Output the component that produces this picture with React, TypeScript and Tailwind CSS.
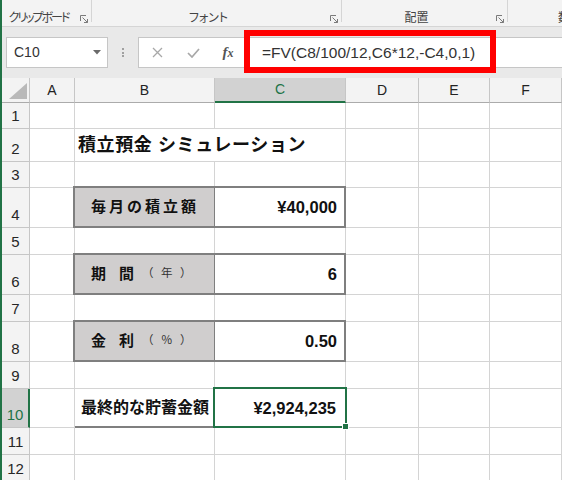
import * as React from 'react'

const cell = 'border-r border-b border-[#d4d4d4] bg-white'
const colHead =
  'flex items-center justify-center border-r border-b border-r-[#c6c6c6] border-b-[#ababab] bg-[#f3f3f3] text-[14px]'

export default function App() {
  return (
    <div className="h-[480px] w-[562px] overflow-hidden border-l-2 border-[#217346] bg-white font-['Liberation_Sans','Noto_Sans_CJK_JP',sans-serif] text-[#222]">
      <Ribbon />
      <FormulaBar />
      <Sheet />
    </div>
  )
}

function Ribbon() {
  return (
    <div className="flex h-[27px] border-b border-[#d5d5d5] bg-[#f3f3f3] text-[12px] leading-none text-[#444] [font-feature-settings:'palt']">
      <RibbonGroup label={<span className="tracking-[-2px]">クリップボード</span>} width="w-[90px]" />
      <RibbonGroup label="フォント" width="w-[250px]" />
      <RibbonGroup label="配置" width="w-[166px]" />
      <div className="flex flex-1 items-end pb-[2px] pl-[50px] whitespace-nowrap">数値</div>
    </div>
  )
}

function RibbonGroup({ label, width }: { label: React.ReactNode; width: string }) {
  return (
    <div className={`flex h-full shrink-0 ${width}`}>
      <div className="flex flex-1 items-end justify-center pb-[2px] whitespace-nowrap">{label}</div>
      <div className="flex w-[16px] items-end pb-[3px] pl-[5px]">
        <svg width="8" height="8" viewBox="0 0 8 8" fill="none" stroke="#7a7a7a" strokeWidth="1">
          <path d="M0.5 6V0.5H6" />
          <path d="M2.5 2.5l5 5M7.5 4v3.5H4" />
        </svg>
      </div>
      <div className="h-[22px] w-px bg-[#d5d5d5]" />
    </div>
  )
}

function FormulaBar() {
  return (
    <div className="relative flex h-[51px] bg-[#e9e9e9] pl-[4px] pt-[10px]">
      <div className="flex h-[31px] w-[102px] shrink-0 items-center border border-[#c6c6c6] bg-white pl-[7px] pr-[6px] text-[14px] text-[#333]">
        <span className="flex-1">C10</span>
        <svg width="8" height="5" viewBox="0 0 8 5">
          <path d="M0 0h8L4 4.5z" fill="#6a6a6a" />
        </svg>
      </div>
      <div className="flex h-[31px] w-[30px] shrink-0 flex-col items-center justify-center gap-[1.5px]">
        <span className="h-[2px] w-[2px] bg-[#a0a0a0]" />
        <span className="h-[2px] w-[2px] bg-[#a0a0a0]" />
        <span className="h-[2px] w-[2px] bg-[#a0a0a0]" />
      </div>
      <div className="flex h-[31px] w-[107px] shrink-0 items-center border-y border-l border-[#c6c6c6] bg-white">
        <div className="flex w-[36px] shrink-0 justify-center">
          <svg width="11" height="11" viewBox="0 0 11 11" stroke="#a8a8a8" strokeWidth="1.3">
            <path d="M1 1l9 9M10 1l-9 9" />
          </svg>
        </div>
        <div className="flex w-[36px] shrink-0 justify-center">
          <svg width="13" height="10" viewBox="0 0 13 10" fill="none" stroke="#a8a8a8" strokeWidth="1.7">
            <path d="M1 5l4 4 7-8" />
          </svg>
        </div>
        <div className="flex w-[34px] shrink-0 items-center justify-center">
          <span className="font-['Liberation_Serif',serif] text-[15px] font-bold italic leading-none text-[#555]">
            f<span className="text-[12px]">x</span>
          </span>
        </div>
      </div>
      <div className="flex h-[31px] flex-1 items-center border-y border-[#c6c6c6] bg-white pl-[17px] text-[15.5px] text-[#333] whitespace-nowrap">
        =FV(C8/100/12,C6*12,-C4,0,1)
      </div>
      <div className="absolute left-[242px] top-[3px] h-[43px] w-[252px] border-[6px] border-[#ff0000]" />
    </div>
  )
}

function RowHead({ n, active }: { n: number; active?: boolean }) {
  return (
    <div
      className={
        active
          ? 'flex items-end justify-center border-b border-r-2 border-b-[#c6c6c6] border-r-[#217346] bg-[#d2d2d2] pb-[5px] text-[15px] leading-none text-[#217346]'
          : 'flex items-end justify-center border-b border-r border-[#c6c6c6] bg-[#f3f3f3] pb-[5px] text-[15px] leading-none text-[#262626]'
      }
    >
      {n}
    </div>
  )
}

function InputBox({ label, value }: { label: React.ReactNode; value: string }) {
  return (
    <div className="col-span-2 -ml-[2px] -mt-[2px] flex border-2 border-[#7f7f7f] bg-white">
      <div className="flex w-[140px] items-center border-r border-[#7f7f7f] bg-[#d0cece] pl-[16px] text-[15px] font-bold text-[#111]">
        {label}
      </div>
      <div className="flex flex-1 items-center justify-end pr-[7px] text-[16.5px] font-bold text-[#111]">{value}</div>
    </div>
  )
}

function SpacedLabel({ a, b, unit }: { a: string; b: string; unit: string }) {
  return (
    <span className="flex items-center whitespace-nowrap">
      <span>{a}</span>
      <span className="ml-[13px]">{b}</span>
      <span className="ml-[8px] text-[11.5px] font-normal tracking-[7.5px] text-[#333]">（{unit}）</span>
    </span>
  )
}

function Sheet() {
  const rows: React.ReactNode[] = []
  for (let r = 1; r <= 12; r++) {
    rows.push(<RowHead key={`h${r}`} n={r} active={r === 10} />)
    rows.push(<div key={`a${r}`} className={cell} />)
    if (r === 2) {
      rows.push(
        <div
          key="title"
          className="col-span-2 flex items-center border-r border-b border-[#d4d4d4] pl-[3px] text-[18px] font-bold tracking-[0.6px] whitespace-nowrap text-[#111]"
        >
          積立預金 シミュレーション
        </div>,
      )
    } else if (r === 4) {
      rows.push(
        <InputBox key="b4" label={<span className="tracking-[3px]">毎月の積立額</span>} value="¥40,000" />,
      )
    } else if (r === 6) {
      rows.push(<InputBox key="b6" label={<SpacedLabel a="期" b="間" unit="年" />} value="6" />)
    } else if (r === 8) {
      rows.push(<InputBox key="b8" label={<SpacedLabel a="金" b="利" unit="％" />} value="0.50" />)
    } else if (r === 10) {
      rows.push(
        <div
          key="b10"
          className="flex items-center border-r border-b-2 border-r-[#d4d4d4] border-b-[#7f7f7f] pl-[6px] text-[16px] font-bold whitespace-nowrap text-[#111]"
        >
          最終的な貯蓄金額
        </div>,
      )
      rows.push(
        <div
          key="c10"
          className="relative flex items-center justify-end border-r border-b border-[#d4d4d4] pr-[9px] text-[16.5px] font-bold text-[#111]"
        >
          ¥2,924,235
          <div className="absolute -top-[2px] -right-[2px] -bottom-px -left-[2px] border-2 border-[#217346]" />
          <div className="absolute -right-[4px] -bottom-[3px] h-[7px] w-[7px] border border-white bg-[#217346]" />
        </div>,
      )
    } else {
      rows.push(<div key={`b${r}`} className={cell} />)
      rows.push(<div key={`c${r}`} className={cell} />)
    }
    rows.push(<div key={`d${r}`} className={cell} />)
    rows.push(<div key={`e${r}`} className={cell} />)
    rows.push(<div key={`f${r}`} className={cell} />)
  }

  return (
    <div className="grid grid-cols-[28px_45px_140px_131px_73px_71px_1fr] grid-rows-[25px_26px_33px_26px_40px_27px_40px_27px_40px_27px_39px_27px_27px]">
      <div className="flex items-end justify-end border-r border-b border-r-[#c6c6c6] border-b-[#ababab] bg-[#f3f3f3] pr-[2px] pb-[3px]">
        <svg width="18" height="16" viewBox="0 0 18 16">
          <path d="M18 0v16H0z" fill="#b9b9b9" />
        </svg>
      </div>
      <div className={colHead}>A</div>
      <div className={colHead}>B</div>
      <div className="flex items-center justify-center border-r border-b-2 border-r-[#c6c6c6] border-b-[#217346] bg-[#d2d2d2] text-[14px] text-[#217346]">
        C
      </div>
      <div className={colHead}>D</div>
      <div className={colHead}>E</div>
      <div className={colHead}>F</div>
      {rows}
    </div>
  )
}
